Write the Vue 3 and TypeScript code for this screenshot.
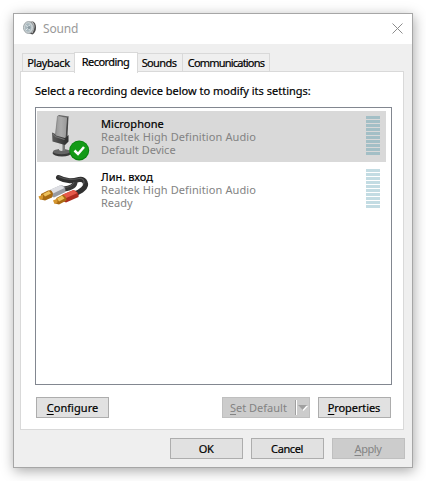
<script setup lang="ts">
interface Device {
  name: string
  driver: string
  status: string
  kind: 'mic' | 'line'
  selected: boolean
}

const tabs = [
  { id: 'playback', label: 'Playback' },
  { id: 'recording', label: 'Recording' },
  { id: 'sounds', label: 'Sounds' },
  { id: 'communications', label: 'Communications' },
]
const activeTab = 'recording'

const devices: Device[] = [
  { name: 'Microphone', driver: 'Realtek High Definition Audio', status: 'Default Device', kind: 'mic', selected: true },
  { name: 'Лин. вход', driver: 'Realtek High Definition Audio', status: 'Ready', kind: 'line', selected: false },
]
</script>

<template>
  <main class="desktop">
    <section class="window">
      <header class="titlebar">
        <svg class="speaker" width="14" height="14" viewBox="0 0 14 14">
          <path d="M5 1L10 0.5Q13 2 13 6.500Q13 11 9.500 13.500L5 12Z" fill="#4c4c4c" />
          <path d="M9 1Q12 4 10.500 8L9 12" fill="none" stroke="#bbb" stroke-width="1.200" />
          <ellipse cx="5.500" cy="6.500" rx="5" ry="5.900" fill="#cdd3d5" stroke="#9ca4a7" />
          <ellipse cx="5.200" cy="6.500" rx="3.200" ry="4.200" fill="#a9b8be" />
          <path d="M2.500 4L5 6L7 3.500M3 9L5 7L7 9.500" fill="none" stroke="#dfe6e8" />
          <circle cx="6" cy="6.500" r="1.500" fill="#8b9aa1" />
        </svg>
        <span class="title">Sound</span>
        <svg class="close" width="11" height="11" viewBox="0 0 11 11">
          <path d="M0.500 0.500L10.500 10.500M10.500 0.500L0.500 10.500" stroke="#8c8c8c" fill="none" />
        </svg>
      </header>

      <nav class="tabs">
        <div v-for="t in tabs" :key="t.id" class="tab" :class="[t.id, { active: t.id === activeTab }]">
          <span>{{ t.label }}</span>
        </div>
      </nav>

      <div class="panel">
        <p class="hint">Select a recording device below to modify its settings:</p>
        <div class="list">
          <div v-for="d in devices" :key="d.name" class="device" :class="{ selected: d.selected }">
            <svg v-if="d.kind === 'mic'" class="icon" width="54" height="50" viewBox="0 0 54 50">
              <defs>
                <linearGradient id="grille" x1="0" x2="1">
                  <stop offset="0" stop-color="#959595" />
                  <stop offset="0.5" stop-color="#acacac" />
                  <stop offset="1" stop-color="#999" />
                </linearGradient>
                <linearGradient id="stand" x1="0" x2="1">
                  <stop offset="0" stop-color="#5c5c5c" />
                  <stop offset="1" stop-color="#2c2c2c" />
                </linearGradient>
              </defs>
              <ellipse cx="25" cy="42" rx="9.500" ry="3.500" fill="#3a3a3a" />
              <ellipse cx="24.500" cy="40.700" rx="8.500" ry="2.600" fill="#666" />
              <path d="M22 31H27V39Q24.500 41 22 39Z" fill="#d4d4d4" />
              <path d="M25.500 32H28V40H25.500Z" fill="#777" />
              <path d="M29.500 6.500L31.500 5.500L30.500 25L28 28Z" fill="#484848" />
              <path d="M20.500 5L30 6.500L28.500 28L18 25Z" fill="url(#grille)" />
              <path d="M20.500 5L22 4L32 5.500L30 6.700Z" fill="#666" />
              <path d="M20.500 5L18.500 24" stroke="#777" stroke-width="0.600" fill="none" />
              <path d="M15 21.500L17.500 22.500L19 24.500L28 27L31.500 24V30.500L28 34L15.500 30.500Z" fill="url(#stand)" />
              <path d="M16 23L18 25.500L27.500 28.500" fill="none" stroke="#777" />
              <circle cx="42.200" cy="39.500" r="10" fill="#08820e" />
              <circle cx="42.200" cy="39.200" r="9" fill="#139a17" />
              <path d="M37.500 39.500L41 43L47 36" fill="none" stroke="#fff" stroke-width="2.500" />
            </svg>
            <svg v-else class="icon" width="54" height="50" viewBox="0 0 54 50">
              <path d="M21.500 13.500C30 18 36 17 42 15.500C48 14.500 51 21 46 25C43 28 40 29 37 30" fill="none" stroke="#303030" stroke-width="5" stroke-linecap="round" />
              <path d="M22 12.800C30 16.500 36 15.800 42 14.500C46 14 48 17 46.500 20" fill="none" stroke="#555" stroke-width="1.200" stroke-linecap="round" />
              <path d="M27 25C34 24 38 22 38 18" fill="none" stroke="#363636" stroke-width="5" />
              <path d="M28 23.500C33 23 36 21 37 18" fill="none" stroke="#575757" stroke-width="1" />
              <path d="M13 26L24 21Q29 22 28.500 28L17 33.500Q12 32 13 26Z" fill="#989ba2" />
              <path d="M13.500 25.500L24 21L27.500 24L16 29.500Z" fill="#dedfe4" />
              <path d="M4 30L11 26.500Q15 25 16 30L15 33.500L8 36.500L4 35.500Z" fill="#a96b12" />
              <path d="M6 30L12 27L14 29.500L8 32.500Z" fill="#edc05a" />
              <path d="M1.500 32.500L6 30.500V34.500L3 36Z" fill="#d5952d" />
              <path d="M25 31L36.500 26Q42 27.500 41.500 33L29 38.500Q24 37 25 31Z" fill="#ad2b20" />
              <path d="M25.500 30.500L36.500 26L40.500 29L28 34.500Z" fill="#e5584a" />
              <path d="M19.500 34L25 31Q29.500 31 29.500 36.500L22 40.500L18 39.500Z" fill="#a96b12" />
              <path d="M20 34.500L25 31.500L27.500 34.500L22 37.500Z" fill="#edc05a" />
              <path d="M16 36.500L20.500 34.500V38.500L17.500 40Z" fill="#d5952d" />
            </svg>
            <div class="info">
              <div class="name">{{ d.name }}</div>
              <div class="driver">{{ d.driver }}</div>
              <div class="status">{{ d.status }}</div>
            </div>
            <div class="meter"><i v-for="n in 10" :key="n" /></div>
          </div>
        </div>
        <div class="actions">
          <button class="btn configure"><span><u>C</u>onfigure</span></button>
          <button class="btn split disabled">
            <span><u>S</u>et Default</span>
            <svg width="13" height="15" viewBox="0 0 13 15">
              <path d="M0.500 0V15" stroke="#a0a0a0" />
              <path d="M1.500 0V15" stroke="#fff" />
              <path d="M4 6H13L8.500 11Z" fill="#fff" />
              <path d="M3 5H12L7.500 10Z" fill="#a0a0a0" />
            </svg>
          </button>
          <button class="btn properties"><span><u>P</u>roperties</span></button>
        </div>
      </div>

      <footer class="footer">
        <button class="btn"><span>OK</span></button>
        <button class="btn"><span>Cancel</span></button>
        <button class="btn disabled"><span><u>A</u>pply</span></button>
      </footer>
    </section>
  </main>
</template>

<style>
body {
  background: #fff;
}
</style>

<style scoped>
* {
  box-sizing: border-box;
}
.desktop {
  width: 426px;
  height: 481px;
  padding: 13px;
  overflow: hidden;
  background: #fff;
  font: 11px/13px "Noto Sans", "Open Sans", sans-serif;
  color: #000;
  white-space: nowrap;
}
.window {
  width: 400px;
  height: 455px;
  border: 1px solid #a6a6a6;
  background: #efefef;
  box-shadow: 1px 3px 12px rgba(0, 0, 0, 0.34);
}
.titlebar {
  height: 30px;
  padding: 0 9px;
  display: flex;
  align-items: center;
  background: #fff;
}
.speaker {
  margin-top: -2px;
}
.title {
  margin-left: 6px;
  margin-top: -2px;
  color: #999;
  font-size: 12px;
  letter-spacing: -0.2px;
}
.close {
  margin-left: auto;
  margin-top: -2px;
}
.tabs {
  height: 28px;
  padding-left: 8px;
  display: flex;
  align-items: flex-end;
}
.tab {
  height: 19px;
  padding-top: 2px;
  border: 1px solid #d9d9d9;
  border-bottom: 0;
  border-left: 0;
  text-align: center;
}
.tab.playback {
  width: 52px;
  border-left: 1px solid #d9d9d9;
  border-right: 0;
  letter-spacing: -0.35px;
}
.tab.recording {
  width: 64px;
  padding-right: 1px;
  letter-spacing: -0.55px;
}
.tab.sounds {
  width: 45px;
  padding-right: 2px;
  letter-spacing: -0.6px;
}
.tab.communications {
  width: 87px;
  letter-spacing: -0.8px;
}
.tab.active {
  height: 21px;
  margin-bottom: -1px;
  border-left: 1px solid #d9d9d9;
  background: #fff;
  position: relative;
}
.tab,
.hint,
.name,
.btn:not(.disabled) {
  -webkit-text-stroke: 0.2px #000;
}
.panel {
  width: 384px;
  height: 359px;
  margin-left: 6px;
  margin-top: -1px;
  border: 1px solid #d9d9d9;
  padding: 12px 11px 0 14px;
  background: #fff;
}
.hint {
  margin: 0;
  height: 23px;
}
.list {
  width: 357px;
  height: 278px;
  padding: 3px 1px;
  border: 1px solid #828790;
  display: flex;
  flex-direction: column;
  gap: 2px;
}
.device {
  width: 349px;
  height: 51px;
  display: flex;
}
.device.selected {
  background: #d9d9d9;
}
.icon {
  flex: none;
}
.info {
  width: 275px;
  padding: 6px 0 0 10px;
  color: #838383;
}
.name {
  color: #000;
  letter-spacing: 0.05px;
}
.driver {
  letter-spacing: 0.1px;
}
.meter {
  width: 14px;
  padding-top: 5px;
  display: flex;
  flex-direction: column;
  gap: 1px;
}
.meter i {
  height: 3px;
  background: #c3dce3;
}
.selected .meter i {
  background: #a3bfc6;
}
.actions {
  display: flex;
  margin: 12px 1px 0 1px;
}
.btn {
  width: 73px;
  height: 21px;
  padding: 0 0 1px;
  display: flex;
  align-items: center;
  justify-content: center;
  border: 1px solid #adadad;
  border-radius: 0;
  background: #e1e1e1;
  color: #000;
  font: inherit;
}
.btn.disabled {
  border-color: #bfbfbf;
  background: #ccc;
  color: #838383;
}
.btn.configure {
  letter-spacing: 0.05px;
}
.btn.properties {
  letter-spacing: -0.1px;
  padding-right: 1px;
}
.btn.split {
  width: 88px;
  margin-left: auto;
  margin-right: 8px;
  padding: 0 1px 0 7px;
  justify-content: space-between;
}
.btn u {
  text-underline-offset: 2px;
}
.footer {
  display: flex;
  justify-content: flex-end;
  gap: 8px;
  padding: 8px 7px 0 0;
}
.footer .btn {
  padding-right: 1px;
  letter-spacing: -0.4px;
}
</style>
